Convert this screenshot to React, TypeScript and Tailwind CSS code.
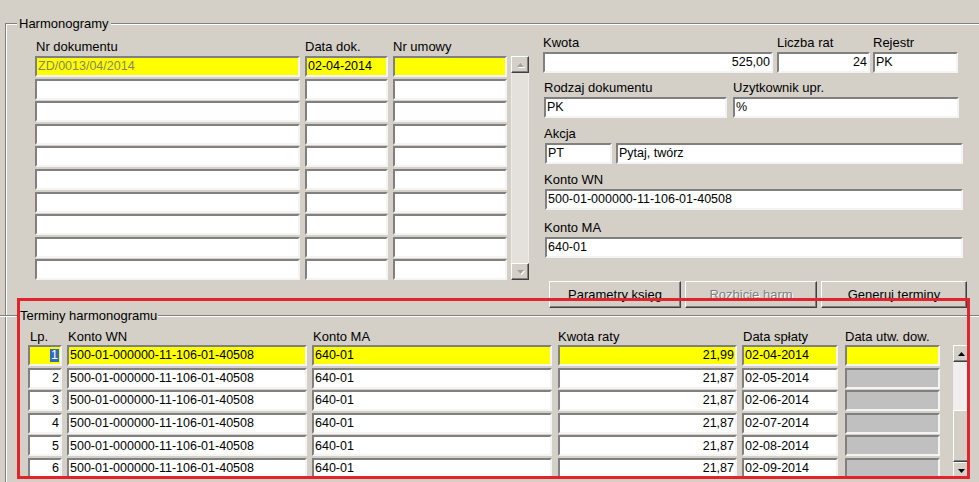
import React from "react";

const FONT = "font-['Liberation_Sans',Arial,sans-serif]";

const SUNKEN =
  "border-2 border-t-[#808080] border-l-[#808080] border-r-[#f4f4f4] border-b-[#f4f4f4]";
const RAISED =
  "border border-t-white border-l-white border-r-[#404040] border-b-[#404040] shadow-[inset_-1px_-1px_0_#808080]";

type FieldProps = {
  w: string;
  value?: React.ReactNode;
  bg?: string;
  right?: boolean;
  muted?: boolean;
  ml?: string;
};

function Field({ w, value = "", bg = "bg-white", right = false, muted = false, ml = "" }: FieldProps) {
  return (
    <div
      className={`${SUNKEN} ${bg} ${w} ${ml} flex h-[21px] shrink-0 items-center overflow-hidden whitespace-nowrap text-[12.5px] leading-none ${
        right ? "justify-end pr-[1px]" : "pl-[1px]"
      } ${muted ? "text-[#86866a]" : "text-black"}`}
    >
      {value}
    </div>
  );
}

function Label({ children, ml = "" }: { children: React.ReactNode; ml?: string }) {
  return <div className={`${ml} h-[16px] whitespace-nowrap text-[13px] leading-[16px]`}>{children}</div>;
}

function Arrow({ down = false, disabled = false }: { down?: boolean; disabled?: boolean }) {
  const pts = down ? "0,0 7,0 3.5,4" : "0,4 3.5,0 7,4";
  return (
    <svg width="7" height="4" viewBox="0 0 7 4" className={disabled ? "drop-shadow-[1px_1px_0_#ffffff]" : ""}>
      <polygon points={pts} fill={disabled ? "#a0a0a0" : "#000000"} />
    </svg>
  );
}

function ScrollBtn({ down = false, disabled = false }: { down?: boolean; disabled?: boolean }) {
  return (
    <div className={`${RAISED} flex h-[17px] shrink-0 items-center justify-center bg-[#d4d0c8]`}>
      <Arrow down={down} disabled={disabled} />
    </div>
  );
}

const topRows = Array.from({ length: 10 }, (_, i) => i);

const terms = [
  { lp: 1, kwota: "21,99", data: "02-04-2014" },
  { lp: 2, kwota: "21,87", data: "02-05-2014" },
  { lp: 3, kwota: "21,87", data: "02-06-2014" },
  { lp: 4, kwota: "21,87", data: "02-07-2014" },
  { lp: 5, kwota: "21,87", data: "02-08-2014" },
  { lp: 6, kwota: "21,87", data: "02-09-2014" },
];

export default function App() {
  return (
    <div className={`${FONT} relative h-[482px] w-[979px] overflow-hidden bg-[#d4d0c8] pl-[5px] pt-[23px] text-black`}>
      {/* Harmonogramy group */}
      <div className="relative h-[520px] w-[1000px] border-l border-t border-[#808080] shadow-[inset_1px_1px_0_#ffffff]">
        <span className="absolute -top-[8px] left-[11px] bg-[#d4d0c8] px-[2px] text-[13px] leading-[15px]">
          Harmonogramy
        </span>

        <div className="flex items-start">
          {/* document list */}
          <div className="ml-[29px] mt-[15px]">
            <div className="flex">
              <Label ml="w-[265px] pl-[1px]">Nr dokumentu</Label>
              <Label ml="ml-[5px] w-[83px]">Data dok.</Label>
              <Label ml="ml-[5px] w-[114px]">Nr umowy</Label>
            </div>
            <div className="mt-[1px] flex">
              <div className="flex flex-col gap-y-[1.6px]">
                {topRows.map((i) => (
                  <div key={i} className="flex">
                    <Field
                      w="w-[265px]"
                      bg={i === 0 ? "bg-[#ffff00]" : "bg-white"}
                      value={i === 0 ? "ZD/0013/04/2014" : ""}
                      muted
                    />
                    <Field
                      w="w-[83px]"
                      ml="ml-[5px]"
                      bg={i === 0 ? "bg-[#ffff00]" : "bg-white"}
                      value={i === 0 ? "02-04-2014" : ""}
                    />
                    <Field w="w-[114px]" ml="ml-[5px]" bg={i === 0 ? "bg-[#ffff00]" : "bg-white"} />
                  </div>
                ))}
              </div>
              <div className="ml-[4px] flex w-[18px] flex-col">
                <ScrollBtn disabled />
                <div className="flex-1 border-x border-[#eeece8] bg-[#e4e1dc]" />
                <ScrollBtn down disabled />
              </div>
            </div>
          </div>

          {/* details */}
          <div className="ml-[14px] mt-[11px]">
            <div className="flex">
              <div>
                <Label>Kwota</Label>
                <div className="mt-[1px]">
                  <Field w="w-[230px]" value="525,00" right />
                </div>
              </div>
              <div className="ml-[4px]">
                <Label>Liczba rat</Label>
                <div className="mt-[1px]">
                  <Field w="w-[93px]" value="24" right />
                </div>
              </div>
              <div className="ml-[3px]">
                <Label>Rejestr</Label>
                <div className="mt-[1px]">
                  <Field w="w-[85px]" value="PK" />
                </div>
              </div>
            </div>

            <div className="mt-[7px] flex">
              <div className="ml-[1px]">
                <Label>Rodzaj dokumentu</Label>
                <div className="mt-[1px]">
                  <Field w="w-[183px]" value="PK" />
                </div>
              </div>
              <div className="ml-[6px]">
                <Label>Uzytkownik upr.</Label>
                <div className="mt-[1px]">
                  <Field w="w-[226px]" value="%" />
                </div>
              </div>
            </div>

            <div className="mt-[8px]">
              <Label ml="ml-[1px]">Akcja</Label>
              <div className="mt-[1px] flex">
                <Field w="w-[67px]" ml="ml-[2px]" value="PT" />
                <Field w="w-[347px]" ml="ml-[4px]" value="Pytaj, twórz" />
              </div>
            </div>

            <div className="mt-[8px]">
              <Label ml="ml-[1px]">Konto WN</Label>
              <div className="mt-[1px]">
                <Field w="w-[418px]" ml="ml-[2px]" value="500-01-000000-11-106-01-40508" />
              </div>
            </div>

            <div className="mt-[10px]">
              <Label ml="ml-[1px]">Konto MA</Label>
              <div className="mt-[1px]">
                <Field w="w-[418px]" ml="ml-[2px]" value="640-01" />
              </div>
            </div>

            <div className="ml-[6px] mt-[23px] flex gap-[4px] text-[13px]">
              <button className={`${RAISED} h-[27px] w-[132px] bg-[#d4d0c8]`}>Parametry księg</button>
              <button className={`${RAISED} h-[27px] w-[132px] bg-[#d4d0c8] text-[#808080] [text-shadow:1px_1px_0_#ffffff]`}>
                Rozbicie harm
              </button>
              <button className={`${RAISED} h-[27px] w-[146px] bg-[#d4d0c8]`}>Generuj terminy</button>
            </div>
          </div>
        </div>

        {/* Terminy harmonogramu */}
        <div className="relative -ml-[6px] mt-[7px] h-[2px] border-b border-t border-b-white border-t-[#808080]">
          <span className="absolute -top-[8px] left-[19px] bg-[#d4d0c8] px-[1px] text-[13px] leading-[15px]">
            Terminy harmonogramu
          </span>
        </div>

        <div className="ml-[22px] mt-[12px]">
          <div className="flex">
            <Label ml="w-[34px] pl-[2px]">Lp.</Label>
            <Label ml="ml-[5px] w-[240px] pl-[1px]">Konto WN</Label>
            <Label ml="ml-[5px] w-[240px] pl-[1px]">Konto MA</Label>
            <Label ml="ml-[6px] w-[179px]">Kwota raty</Label>
            <Label ml="ml-[5px] w-[96px] pl-[1px]">Data spłaty</Label>
            <Label ml="ml-[7px] w-[95px]">Data utw. dow.</Label>
          </div>
          <div className="flex">
            <div className="flex flex-col gap-y-[1.6px]">
              {terms.map((t, i) => {
                const bg = i === 0 ? "bg-[#ffff00]" : "bg-white";
                return (
                  <div key={t.lp} className="flex">
                    <Field
                      w="w-[34px]"
                      bg={bg}
                      right
                      value={
                        i === 0 ? (
                          <span className="bg-[#316ac5] px-[1px] text-white">{t.lp}</span>
                        ) : (
                          t.lp
                        )
                      }
                    />
                    <Field w="w-[240px]" ml="ml-[5px]" bg={bg} value="500-01-000000-11-106-01-40508" />
                    <Field w="w-[240px]" ml="ml-[5px]" bg={bg} value="640-01" />
                    <Field w="w-[179px]" ml="ml-[6px]" bg={bg} value={t.kwota} right />
                    <Field w="w-[96px]" ml="ml-[5px]" bg={bg} value={t.data} />
                    <Field w="w-[95px]" ml="ml-[7px]" bg={i === 0 ? "bg-[#ffff00]" : "bg-[#c0c0c0]"} />
                  </div>
                );
              })}
            </div>
            <div className="ml-[13px] flex h-[134px] w-[17px] flex-col">
              <ScrollBtn />
              <div className="h-[48px] bg-[#f0efed]" />
              <div className={`${RAISED} flex-1 bg-[#d4d0c8]`} />
              <ScrollBtn down />
            </div>
          </div>
        </div>
      </div>

      {/* highlight frame */}
      <div className="pointer-events-none absolute left-[17px] top-[298px] h-[181px] w-[953px] border-[3px] border-[#e2232c]" />
    </div>
  );
}
